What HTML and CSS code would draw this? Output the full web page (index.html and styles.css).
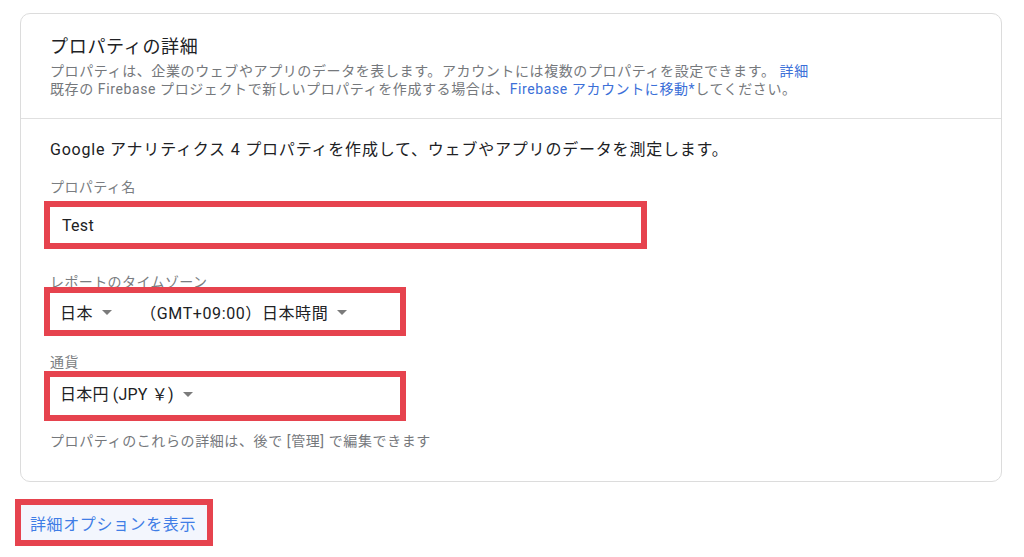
FILE: index.html
```html
<!DOCTYPE html>
<html lang="ja">
<head>
<meta charset="utf-8">
<link rel="stylesheet" href="styles.css">
</head>
<body>
<div class="card">
  <div class="card-head">
    <h2 class="title">プロパティの詳細</h2>
    <p class="desc">プロパティは、企業のウェブやアプリのデータを表します。アカウントには複数のプロパティを設定できます。 <a class="link">詳細</a><br>既存の Firebase プロジェクトで新しいプロパティを作成する場合は、<a class="link">Firebase アカウントに移動*</a>してください。</p>
  </div>
  <div class="card-body">
    <p class="intro">Google アナリティクス 4 プロパティを作成して、ウェブやアプリのデータを測定します。</p>
    <div class="label">プロパティ名</div>
    <div class="mark mark-name"><span class="value">Test</span></div>
    <div class="label label-tz">レポートのタイムゾーン</div>
    <div class="mark mark-tz">
      <span class="select">日本<span class="arrow"></span></span>
      <span class="select select-zone">（GMT+09:00）日本時間<span class="arrow"></span></span>
    </div>
    <div class="label label-cur">通貨</div>
    <div class="mark mark-cur">
      <span class="select select-cur">日本円 (JPY ￥)<span class="arrow"></span></span>
    </div>
    <p class="note">プロパティのこれらの詳細は、後で [管理] で編集できます</p>
  </div>
</div>
<div class="mark mark-btn"><span class="btn">詳細オプションを表示</span></div>
</body>
</html>
```

FILE: styles.css
```css
* { box-sizing: border-box; }
body {
  margin: 0;
  background: #ffffff;
  font-family: Roboto, "Noto Sans CJK JP", sans-serif;
  color: #3c4043;
}
.card {
  margin: 13px 0 0 20px;
  width: 982px;
  height: 469px;
  border: 1px solid #dcdcdc;
  border-radius: 10px;
  background: #fff;
}
.card-head {
  padding: 21px 29px 20px 29px;
  border-bottom: 1px solid #e0e0e0;
}
.title {
  margin: 0;
  font-size: 18px;
  line-height: 24px;
  font-weight: 400;
  letter-spacing: 0.7px;
  color: #202124;
}
.desc {
  margin: 3px 0 0;
  font-size: 14px;
  line-height: 18px;
  letter-spacing: 0.6px;
  color: #75787c;
}
.link { color: #3b6fd8; }
.card-body {
  padding: 20px 29px 0 29px;
}
.intro {
  margin: 0;
  font-size: 16px;
  line-height: 22px;
  letter-spacing: 0.8px;
  color: #202124;
}
.label {
  font-size: 14px;
  line-height: 18px;
  letter-spacing: 0.4px;
  color: #7a7d81;
}
.intro + .label { margin-top: 17px; }
.mark {
  position: relative;
  border: 6px solid #e6434e;
  background: #fff;
}
.mark-name {
  margin: 5px 0 0 -6px;
  width: 603px;
  height: 48px;
  display: flex;
  align-items: center;
  padding-left: 12px;
}
.value {
  font-size: 16px;
  color: #202124;
  letter-spacing: 0.3px;
}
.label-tz { margin-top: 24px; }
.mark-tz {
  margin: -4px 0 0 -6px;
  width: 362px;
  height: 49px;
  display: flex;
  align-items: center;
  padding-left: 10px;
}
.select {
  display: inline-flex;
  align-items: center;
  font-size: 16px;
  letter-spacing: 0.6px;
  color: #202124;
}
.select-zone { margin-left: 28px; }
.select-cur { letter-spacing: 0.2px; }
.arrow {
  display: inline-block;
  width: 0;
  height: 0;
  margin-left: 9px;
  margin-top: 2px;
  border-left: 5px solid transparent;
  border-right: 5px solid transparent;
  border-top: 5px solid #7b7b7b;
}
.label-cur { margin-top: 17px; }
.mark-cur {
  margin: 0 0 0 -6px;
  width: 362px;
  height: 50px;
  display: flex;
  align-items: flex-start;
  padding: 4px 0 0 10px;
}
.note {
  margin: 11px 0 0;
  font-size: 14px;
  line-height: 18px;
  letter-spacing: 0.6px;
  color: #75787c;
}
.mark-btn {
  margin: 17px 0 0 15px;
  width: 198px;
  height: 47px;
  background: #f3f6fd;
  display: flex;
  align-items: center;
  padding-left: 9px;
}
.btn {
  font-size: 16px;
  letter-spacing: 0.6px;
  color: #3f7de6;
}
```
